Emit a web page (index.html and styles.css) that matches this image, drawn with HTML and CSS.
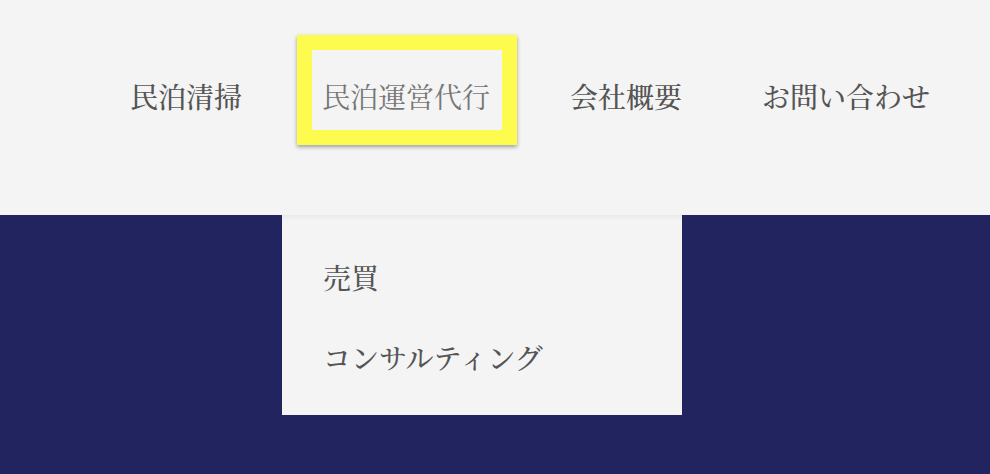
FILE: index.html
```html
<!DOCTYPE html>
<html lang="ja">
<head>
    <meta charset="UTF-8">
    <meta name="viewport" content="width=device-width, initial-scale=1.0">
    <title>民泊運営代行</title>
    <link rel="stylesheet" href="styles.css">
</head>
<body>
    <header class="site-header">
        <nav class="main-nav">
            <ul class="nav-list">
                <li class="nav-item"><a href="#" class="nav-link">民泊清掃</a></li>
                <li class="nav-item has-sub">
                    <a href="#" class="nav-link is-focused">民泊運営代行</a>
                    <ul class="sub-menu">
                        <li><a href="#" class="sub-link">売買</a></li>
                        <li><a href="#" class="sub-link">コンサルティング</a></li>
                    </ul>
                </li>
                <li class="nav-item"><a href="#" class="nav-link">会社概要</a></li>
                <li class="nav-item"><a href="#" class="nav-link">お問い合わせ</a></li>
            </ul>
        </nav>
    </header>
    <main class="hero"></main>
</body>
</html>
```

FILE: styles.css
```css
html, body {
    height: 100%;
}
body {
    margin: 0;
    font-family: "Noto Serif CJK JP", "Liberation Serif", "Noto Sans CJK JP", serif;
    background: #22245f;
    color: #555;
}
ul {
    list-style: none;
    margin: 0;
    padding: 0;
}
a {
    color: inherit;
    text-decoration: none;
}
.site-header {
    height: 215px;
    background: #f4f4f4;
    box-sizing: border-box;
    padding-top: 35px;
    padding-left: 105px;
    position: relative;
    z-index: 2;
}
.nav-list {
    display: flex;
    gap: 28px;
}
.nav-item {
    position: relative;
}
.nav-link {
    display: block;
    border: 15px solid transparent;
    padding: 12px 12px 0 10px;
    line-height: 68px;
    font-size: 28px;
    font-weight: 500;
    color: #555;
    white-space: nowrap;
}
.nav-link.is-focused {
    border-color: #fefb4f;
    color: #777;
    font-weight: 400;
    box-shadow: 0 2px 4px rgba(0, 0, 0, 0.35);
}
.sub-menu {
    position: absolute;
    top: 180px;
    left: -15px;
    width: 400px;
    height: 200px;
    box-sizing: border-box;
    padding-top: 22px;
    background: #f4f4f4;
    box-shadow: inset 0 5px 5px -3px rgba(0, 0, 0, 0.06);
}
.sub-link {
    display: block;
    padding-left: 41px;
    line-height: 80px;
    font-size: 28px;
    font-weight: 500;
    color: #555;
    white-space: nowrap;
}
.hero {
    display: block;
}
```
